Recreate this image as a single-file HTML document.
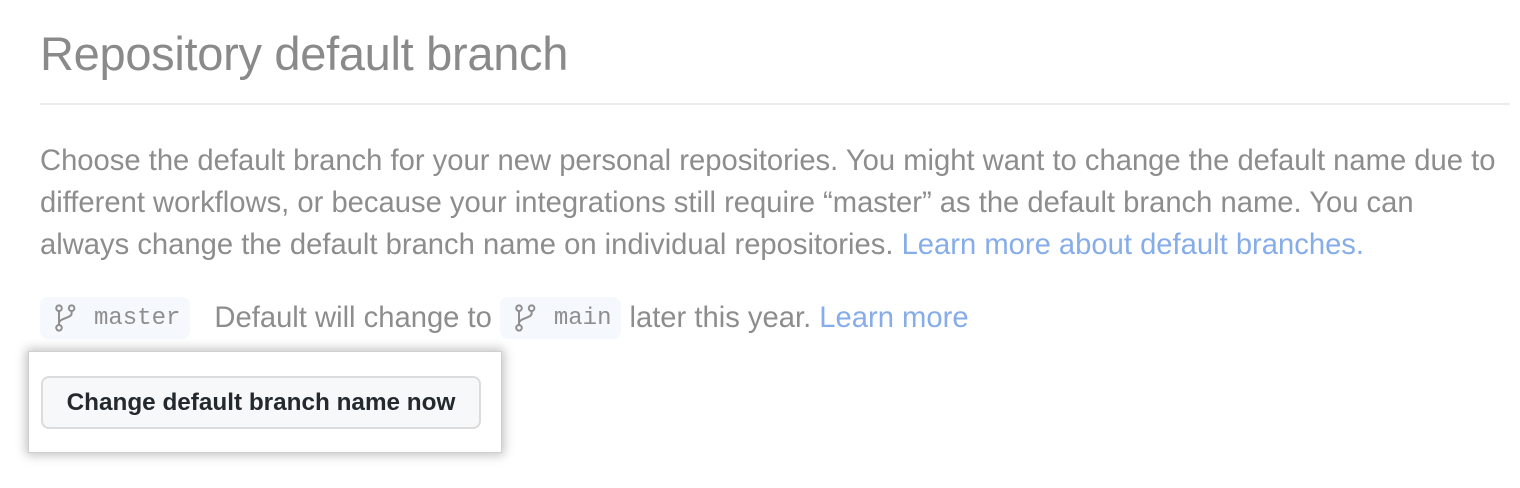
<!DOCTYPE html>
<html><head><meta charset="utf-8"><style>
body{margin:0;width:1520px;height:488px;background:#fff;font-family:"Liberation Sans",sans-serif;position:relative;overflow:hidden}
h1{position:absolute;left:40px;top:26px;margin:0;font-size:47px;font-weight:400;color:#8a8a8a;letter-spacing:-0.3px;white-space:nowrap}
.rule{position:absolute;left:40px;top:103px;width:1470px;height:2px;background:#ececec}
p{position:absolute;left:40px;top:140px;margin:0;width:1490px;font-size:29.2px;line-height:42px;color:#8d8d8d;white-space:nowrap}
a{color:#86adea;text-decoration:none}
.row{position:absolute;left:40px;top:297px;font-size:29.2px;color:#8d8d8d;display:flex;align-items:center;height:42px;white-space:nowrap}
.chip{background:#f5f8fc;border-radius:8px;height:42px;display:inline-flex;align-items:center;padding:0 10px 0 14px;font-family:"Liberation Mono",monospace;font-size:24px;color:#8e8e8e}
.chip svg{margin-right:16px}
.box{position:absolute;left:28px;top:351px;width:474px;height:102px;background:#fff;box-shadow:0 0 10px 2px rgba(0,0,0,.25);border:1px solid #d0d0d0;box-sizing:border-box}
.btn{position:absolute;left:12px;top:24px;width:440px;height:53px;box-sizing:border-box;border:2px solid #dcdcdc;border-radius:8px;background:#f7f8fa;font-size:24.3px;font-weight:700;color:#24292e;display:flex;align-items:center;justify-content:center}
</style></head><body>
<h1>Repository default branch</h1>
<div class="rule"></div>
<p>Choose the default branch for your new personal repositories. You might want to change the default name due to<br>different workflows, or because your integrations still require “master” as the default branch name. You can<br>always change the default branch name on individual repositories. <a>Learn more about default branches.</a></p>
<div class="row">
<span class="chip"><svg width="24" height="28" viewBox="0 0 16 20" fill="none" stroke="#8e8e8e" stroke-width="1.4"><circle cx="3" cy="3" r="2"/><circle cx="12" cy="3" r="2"/><circle cx="3" cy="17" r="2"/><path d="M3 5v10M12 5v2c0 3-9 3-9 7"/></svg>master</span>
<span style="margin:0 8px 0 24px">Default will change to</span>
<span class="chip"><svg width="24" height="28" viewBox="0 0 16 20" fill="none" stroke="#8e8e8e" stroke-width="1.4"><circle cx="3" cy="3" r="2"/><circle cx="12" cy="3" r="2"/><circle cx="3" cy="17" r="2"/><path d="M3 5v10M12 5v2c0 3-9 3-9 7"/></svg>main</span>
<span style="margin-left:8px">later this year. <a>Learn more</a></span>
</div>
<div class="box"><div class="btn">Change default branch name now</div></div>
</body></html>
